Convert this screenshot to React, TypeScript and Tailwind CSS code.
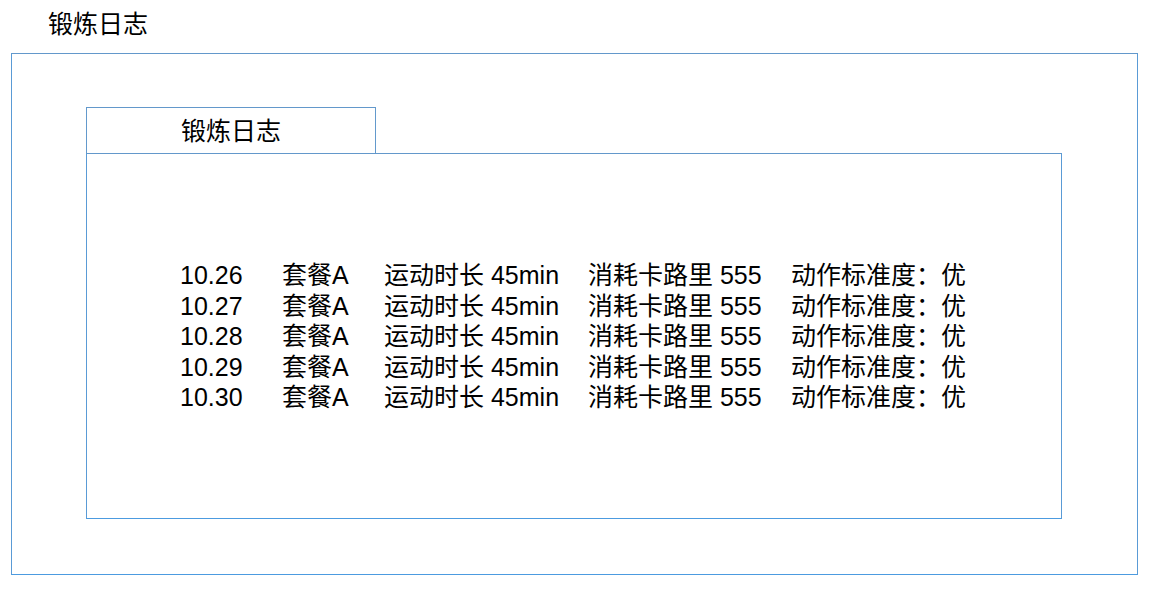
const rows = ["10.26", "10.27", "10.28", "10.29", "10.30"];

export default function App() {
  return (
    <div
      className="w-[1158px] h-[601px] bg-white text-black"
      style={{ fontFamily: '"Liberation Sans", "Noto Sans CJK SC", sans-serif' }}
    >
      <div className="pl-[48px] pt-[9px] mb-[14px] h-[39px] leading-[30px] text-[25px]">锻炼日志</div>

      <div className="ml-[11px] w-[1127px] h-[522px] border border-t-[#6398cb] border-x-[#5a9bd6] border-b-[#4c9be0] pl-[74px] pt-[53px]">
        <div className="w-[290px] h-[46px] border-t border-x border-t-[#6398cb] border-x-[#6399cc] flex items-center justify-center text-[25px] leading-[30px]">
          锻炼日志
        </div>
        <div className="w-[976px] h-[366px] border border-t-[#6398cb] border-x-[#5a9bd6] border-b-[#4c9be0] pl-[93px] pt-[106px]">
          <div className="grid grid-cols-[102px_102px_204px_203px_auto] text-[25px] leading-[30.5px]">
            {rows.map((d) => (
              <div key={d} className="contents">
                <span>{d}</span>
                <span>套餐A</span>
                <span>运动时长 45min</span>
                <span>消耗卡路里 555</span>
                <span>动作标准度：优</span>
              </div>
            ))}
          </div>
        </div>
      </div>
    </div>
  );
}
